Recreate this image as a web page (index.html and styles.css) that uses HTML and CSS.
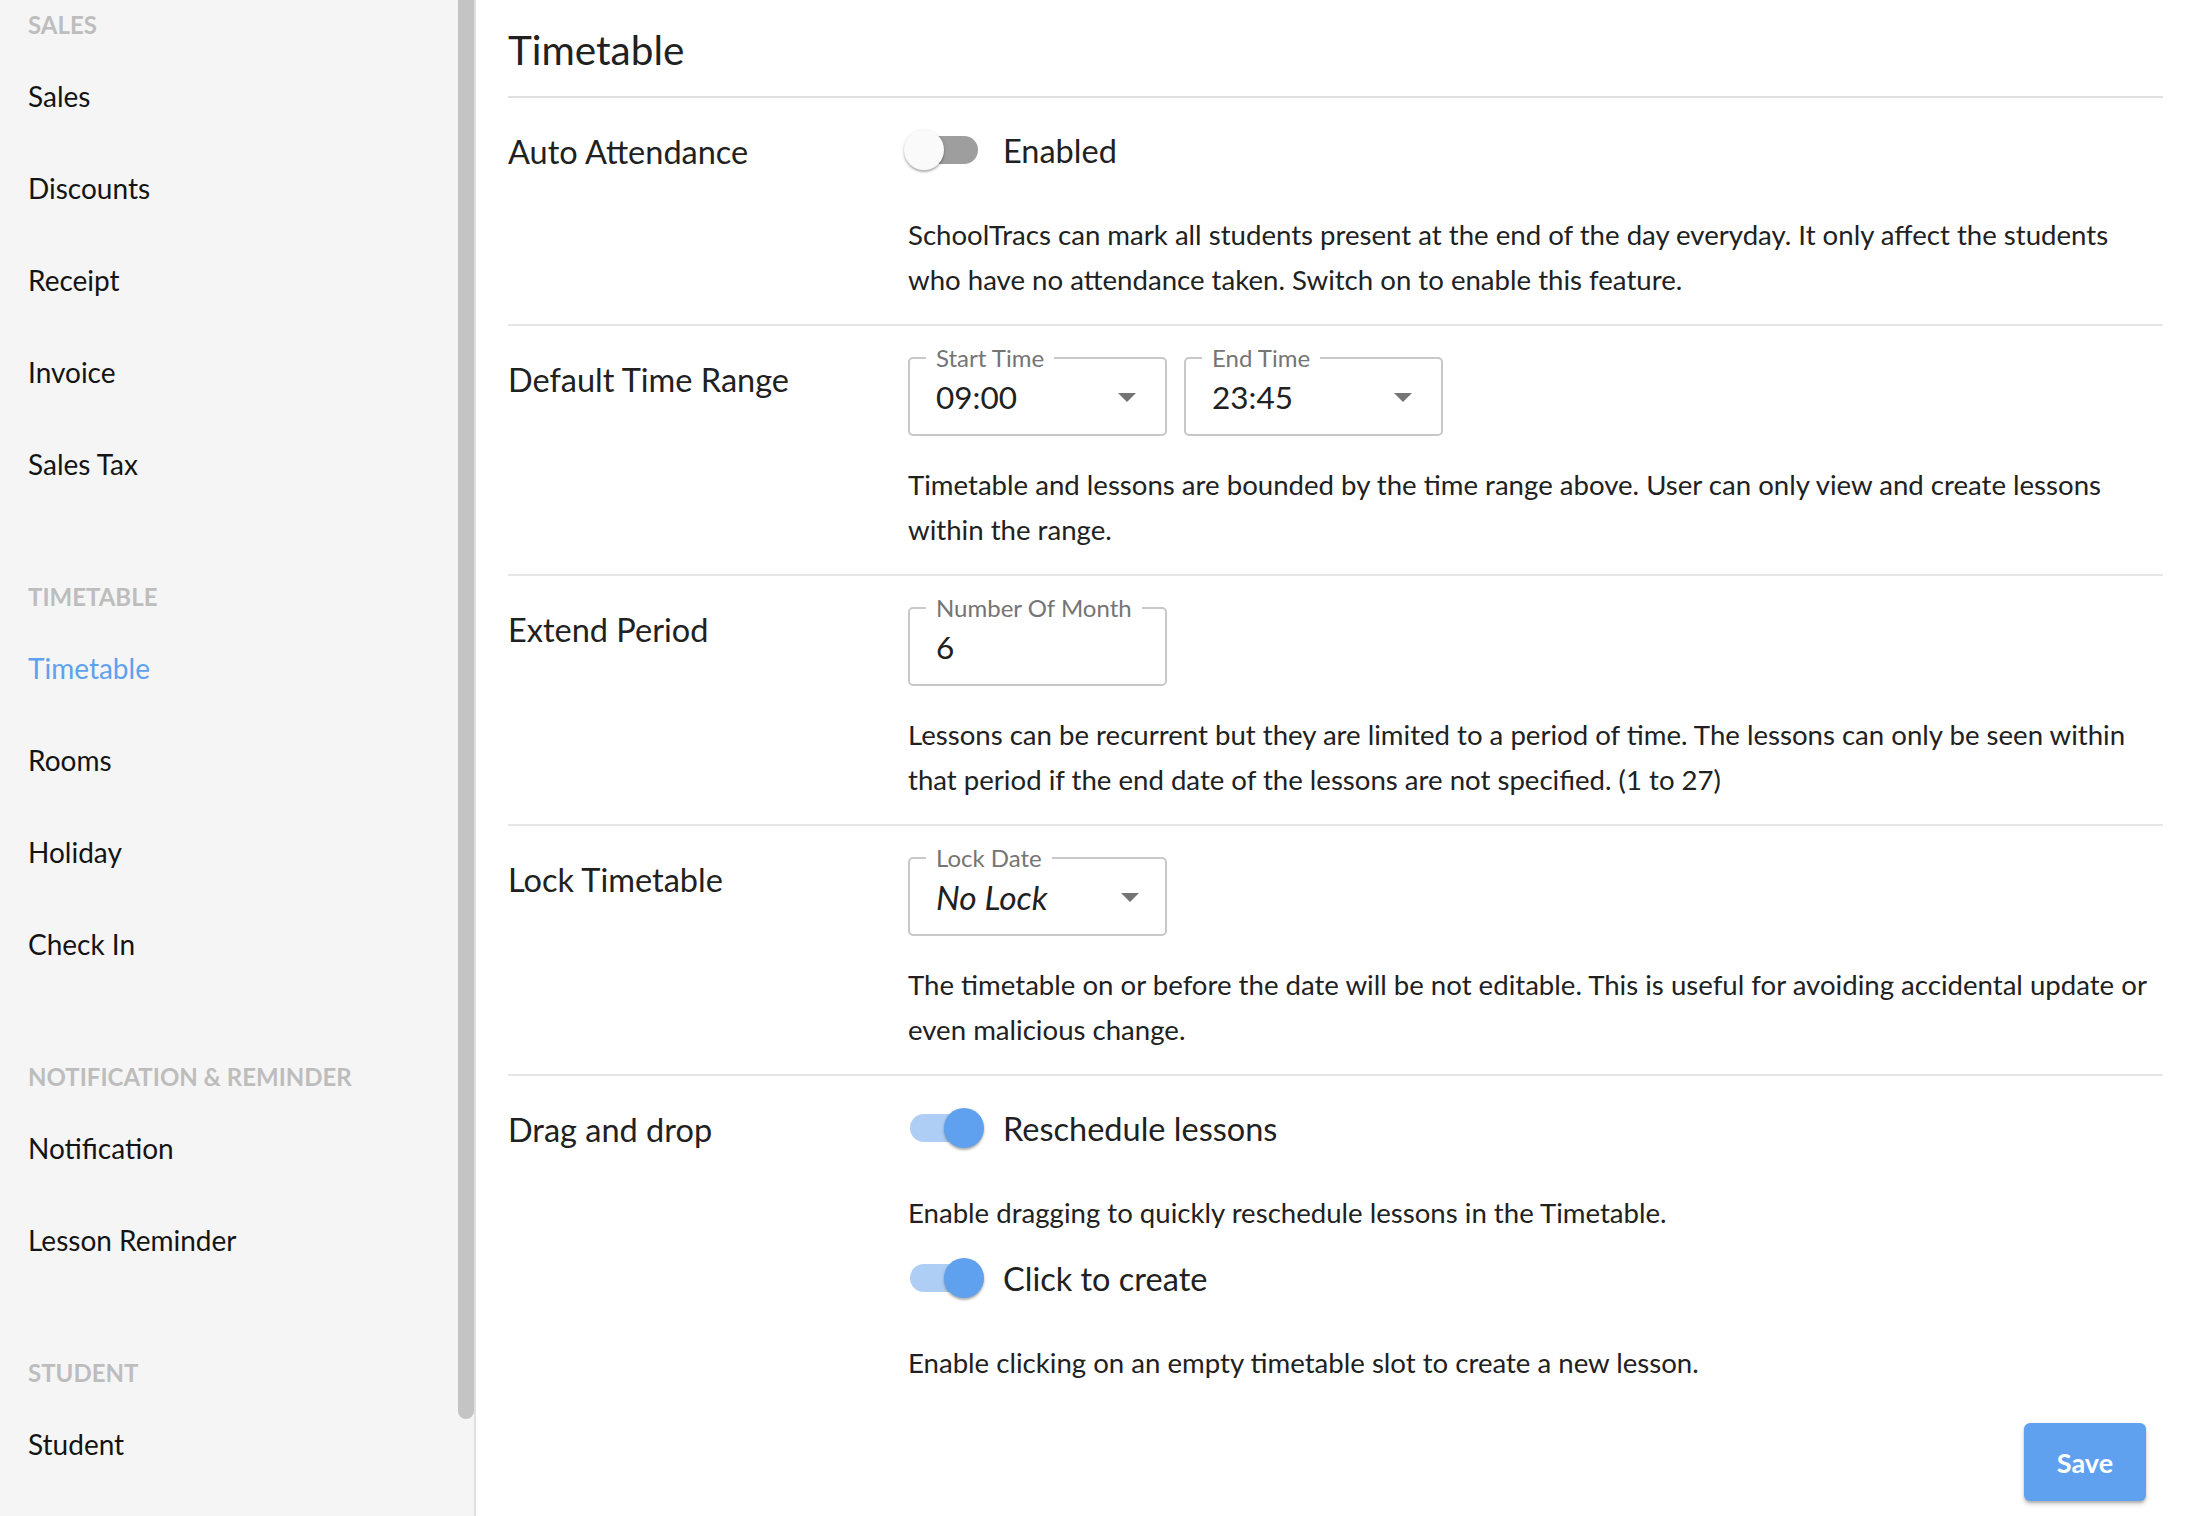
FILE: index.html
```html
<!DOCTYPE html>
<html lang="en">
<head>
  <meta charset="UTF-8">
  <meta name="viewport" content="width=device-width, initial-scale=1.0">
  <title>Timetable Settings</title>
  <link rel="stylesheet" href="styles.css">
</head>
<body>
  <div class="app">
    <aside class="sidebar">
      <div class="nav_section">
        <div class="nav_heading">SALES</div>
        <a class="nav_item" href="#">Sales</a>
        <a class="nav_item" href="#">Discounts</a>
        <a class="nav_item" href="#">Receipt</a>
        <a class="nav_item" href="#">Invoice</a>
        <a class="nav_item" href="#">Sales Tax</a>
      </div>
      <div class="nav_section">
        <div class="nav_heading">TIMETABLE</div>
        <a class="nav_item active" href="#">Timetable</a>
        <a class="nav_item" href="#">Rooms</a>
        <a class="nav_item" href="#">Holiday</a>
        <a class="nav_item" href="#">Check In</a>
      </div>
      <div class="nav_section">
        <div class="nav_heading">NOTIFICATION &amp; REMINDER</div>
        <a class="nav_item" href="#">Notification</a>
        <a class="nav_item" href="#">Lesson Reminder</a>
      </div>
      <div class="nav_section">
        <div class="nav_heading">STUDENT</div>
        <a class="nav_item" href="#">Student</a>
      </div>
      <div class="scroll_thumb"></div>
    </aside>

    <main class="content">
      <h1 class="page_title">Timetable</h1>

      <div class="setting_row">
        <div class="setting_label">Auto Attendance</div>
        <div class="setting_body">
          <label class="switch_line">
            <span class="switch"><span class="switch_track"></span><span class="switch_thumb"></span></span>
            Enabled
          </label>
          <p class="setting_desc">SchoolTracs can mark all students present at the end of the day everyday. It only affect the students<br>who have no attendance taken. Switch on to enable this feature.</p>
        </div>
      </div>

      <div class="setting_row">
        <div class="setting_label">Default Time Range</div>
        <div class="setting_body">
          <div class="field_group">
            <fieldset class="field">
              <legend>Start Time</legend>
              <div class="field_value">09:00<span class="caret"></span></div>
            </fieldset>
            <fieldset class="field">
              <legend>End Time</legend>
              <div class="field_value">23:45<span class="caret"></span></div>
            </fieldset>
          </div>
          <p class="setting_desc">Timetable and lessons are bounded by the time range above. User can only view and create lessons<br>within the range.</p>
        </div>
      </div>

      <div class="setting_row">
        <div class="setting_label">Extend Period</div>
        <div class="setting_body">
          <fieldset class="field">
            <legend>Number Of Month</legend>
            <div class="field_value">6</div>
          </fieldset>
          <p class="setting_desc">Lessons can be recurrent but they are limited to a period of time. The lessons can only be seen within<br>that period if the end date of the lessons are not specified. (1 to 27)</p>
        </div>
      </div>

      <div class="setting_row">
        <div class="setting_label">Lock Timetable</div>
        <div class="setting_body">
          <fieldset class="field">
            <legend>Lock Date</legend>
            <div class="field_value lock_value"><span class="placeholder">No Lock</span><span class="caret"></span></div>
          </fieldset>
          <p class="setting_desc">The timetable on or before the date will be not editable. This is useful for avoiding accidental update or<br>even malicious change.</p>
        </div>
      </div>

      <div class="setting_row last">
        <div class="setting_label">Drag and drop</div>
        <div class="setting_body">
          <label class="switch_line">
            <span class="switch on"><span class="switch_track"></span><span class="switch_thumb"></span></span>
            Reschedule lessons
          </label>
          <p class="setting_desc">Enable dragging to quickly reschedule lessons in the Timetable.</p>
          <label class="switch_line">
            <span class="switch on"><span class="switch_track"></span><span class="switch_thumb"></span></span>
            Click to create
          </label>
          <p class="setting_desc">Enable clicking on an empty timetable slot to create a new lesson.</p>
        </div>
      </div>

      <div class="actions">
        <button class="save_btn" type="button">Save</button>
      </div>
    </main>
  </div>
</body>
</html>
```

FILE: styles.css
```css
* {
  font-family: Lato, "Open Sans", sans-serif;
  box-sizing: border-box;
}
body {
  margin: 0;
  background: #ffffff;
  color: #212121;
}
.app {
  display: flex;
  height: 100vh;
  overflow: hidden;
}

/* left menu */
.sidebar {
  position: relative;
  width: 476px;
  flex-shrink: 0;
  background: #f5f5f5;
  border-right: 2px solid #e0e0e0;
  padding-left: 28px;
  overflow: hidden;
}
.nav_section {
  margin-bottom: 62px;
}
.nav_heading {
  font-size: 24px;
  font-weight: 700;
  line-height: 50px;
  color: #bdbdbd;
}
.nav_item {
  display: block;
  font-size: 28px;
  line-height: 92px;
  color: #141414;
  text-decoration: none;
}
.nav_item.active {
  color: #5fa1ee;
}
.scroll_thumb {
  position: absolute;
  top: 0;
  right: 0;
  width: 16px;
  height: 1419px;
  background: #c4c4c4;
  border-radius: 0 0 8px 8px;
}

/* settings */
.content {
  flex: 1;
  padding: 0 33px 0 32px;
}
.page_title {
  margin: 0;
  padding: 26px 0 23px;
  font-size: 40.5px;
  font-weight: 400;
  line-height: 47px;
  border-bottom: 2px solid #e0e0e0;
}
.setting_row {
  display: grid;
  grid-template-columns: 400px 1fr;
  padding: 32px 0 22px;
  border-bottom: 2px solid #e6e6e6;
}
.setting_row.last {
  border-bottom: none;
}
.setting_label {
  margin-top: 2px;
  font-size: 32.5px;
  line-height: 40px;
}
.setting_desc {
  margin: 26px 0 0;
  font-size: 27.6px;
  line-height: 45px;
}
.switch_line + .setting_desc {
  margin-top: 42px;
}
.setting_desc + .switch_line {
  margin-top: 23px;
}

/* toggle */
.switch_line {
  display: flex;
  align-items: center;
  gap: 19px;
  height: 40px;
  margin-left: -4px;
  font-size: 32.5px;
}
.switch {
  position: relative;
  width: 80px;
  height: 40px;
  flex-shrink: 0;
}
.switch_track {
  position: absolute;
  left: 6px;
  top: 6px;
  width: 68px;
  height: 28px;
  border-radius: 14px;
  background: #9e9e9e;
}
.switch_thumb {
  position: absolute;
  left: 0;
  top: 0;
  width: 40px;
  height: 40px;
  border-radius: 50%;
  background: #fafafa;
  box-shadow: 0 2px 2px rgba(0, 0, 0, 0.24), 0 1px 4px rgba(0, 0, 0, 0.12);
}
.switch.on .switch_track {
  background: #aecef6;
}
.switch.on .switch_thumb {
  left: 40px;
  background: #5fa1ee;
}

/* outlined fields */
.field_group {
  display: flex;
  gap: 17px;
}
.field {
  width: 259px;
  min-width: 0;
  margin: -12px 0 0;
  padding: 0 16px;
  border: 2px solid #c8c8c8;
  border-radius: 5px;
}
.field legend {
  padding: 0 10px;
  font-size: 24px;
  line-height: 24px;
  color: #757575;
}
.field_value {
  display: flex;
  align-items: center;
  justify-content: space-between;
  height: 64px;
  padding: 10px 13px 20px 10px;
  font-size: 31.5px;
  line-height: 34px;
}
.lock_value {
  padding-right: 10px;
}
.placeholder {
  font-size: 33.5px;
  font-style: italic;
}
.caret {
  width: 0;
  height: 0;
  border-left: 9.5px solid transparent;
  border-right: 9.5px solid transparent;
  border-top: 9px solid #757575;
}

/* save */
.actions {
  display: flex;
  justify-content: flex-end;
  padding: 16px 17px 0 0;
}
.save_btn {
  width: 122px;
  height: 78px;
  border: none;
  border-radius: 6px;
  background: #5fa1ee;
  color: #ffffff;
  font-size: 27px;
  font-weight: 700;
  box-shadow: 0 3px 5px rgba(0, 0, 0, 0.2), 0 2px 2px rgba(0, 0, 0, 0.14);
}
```
